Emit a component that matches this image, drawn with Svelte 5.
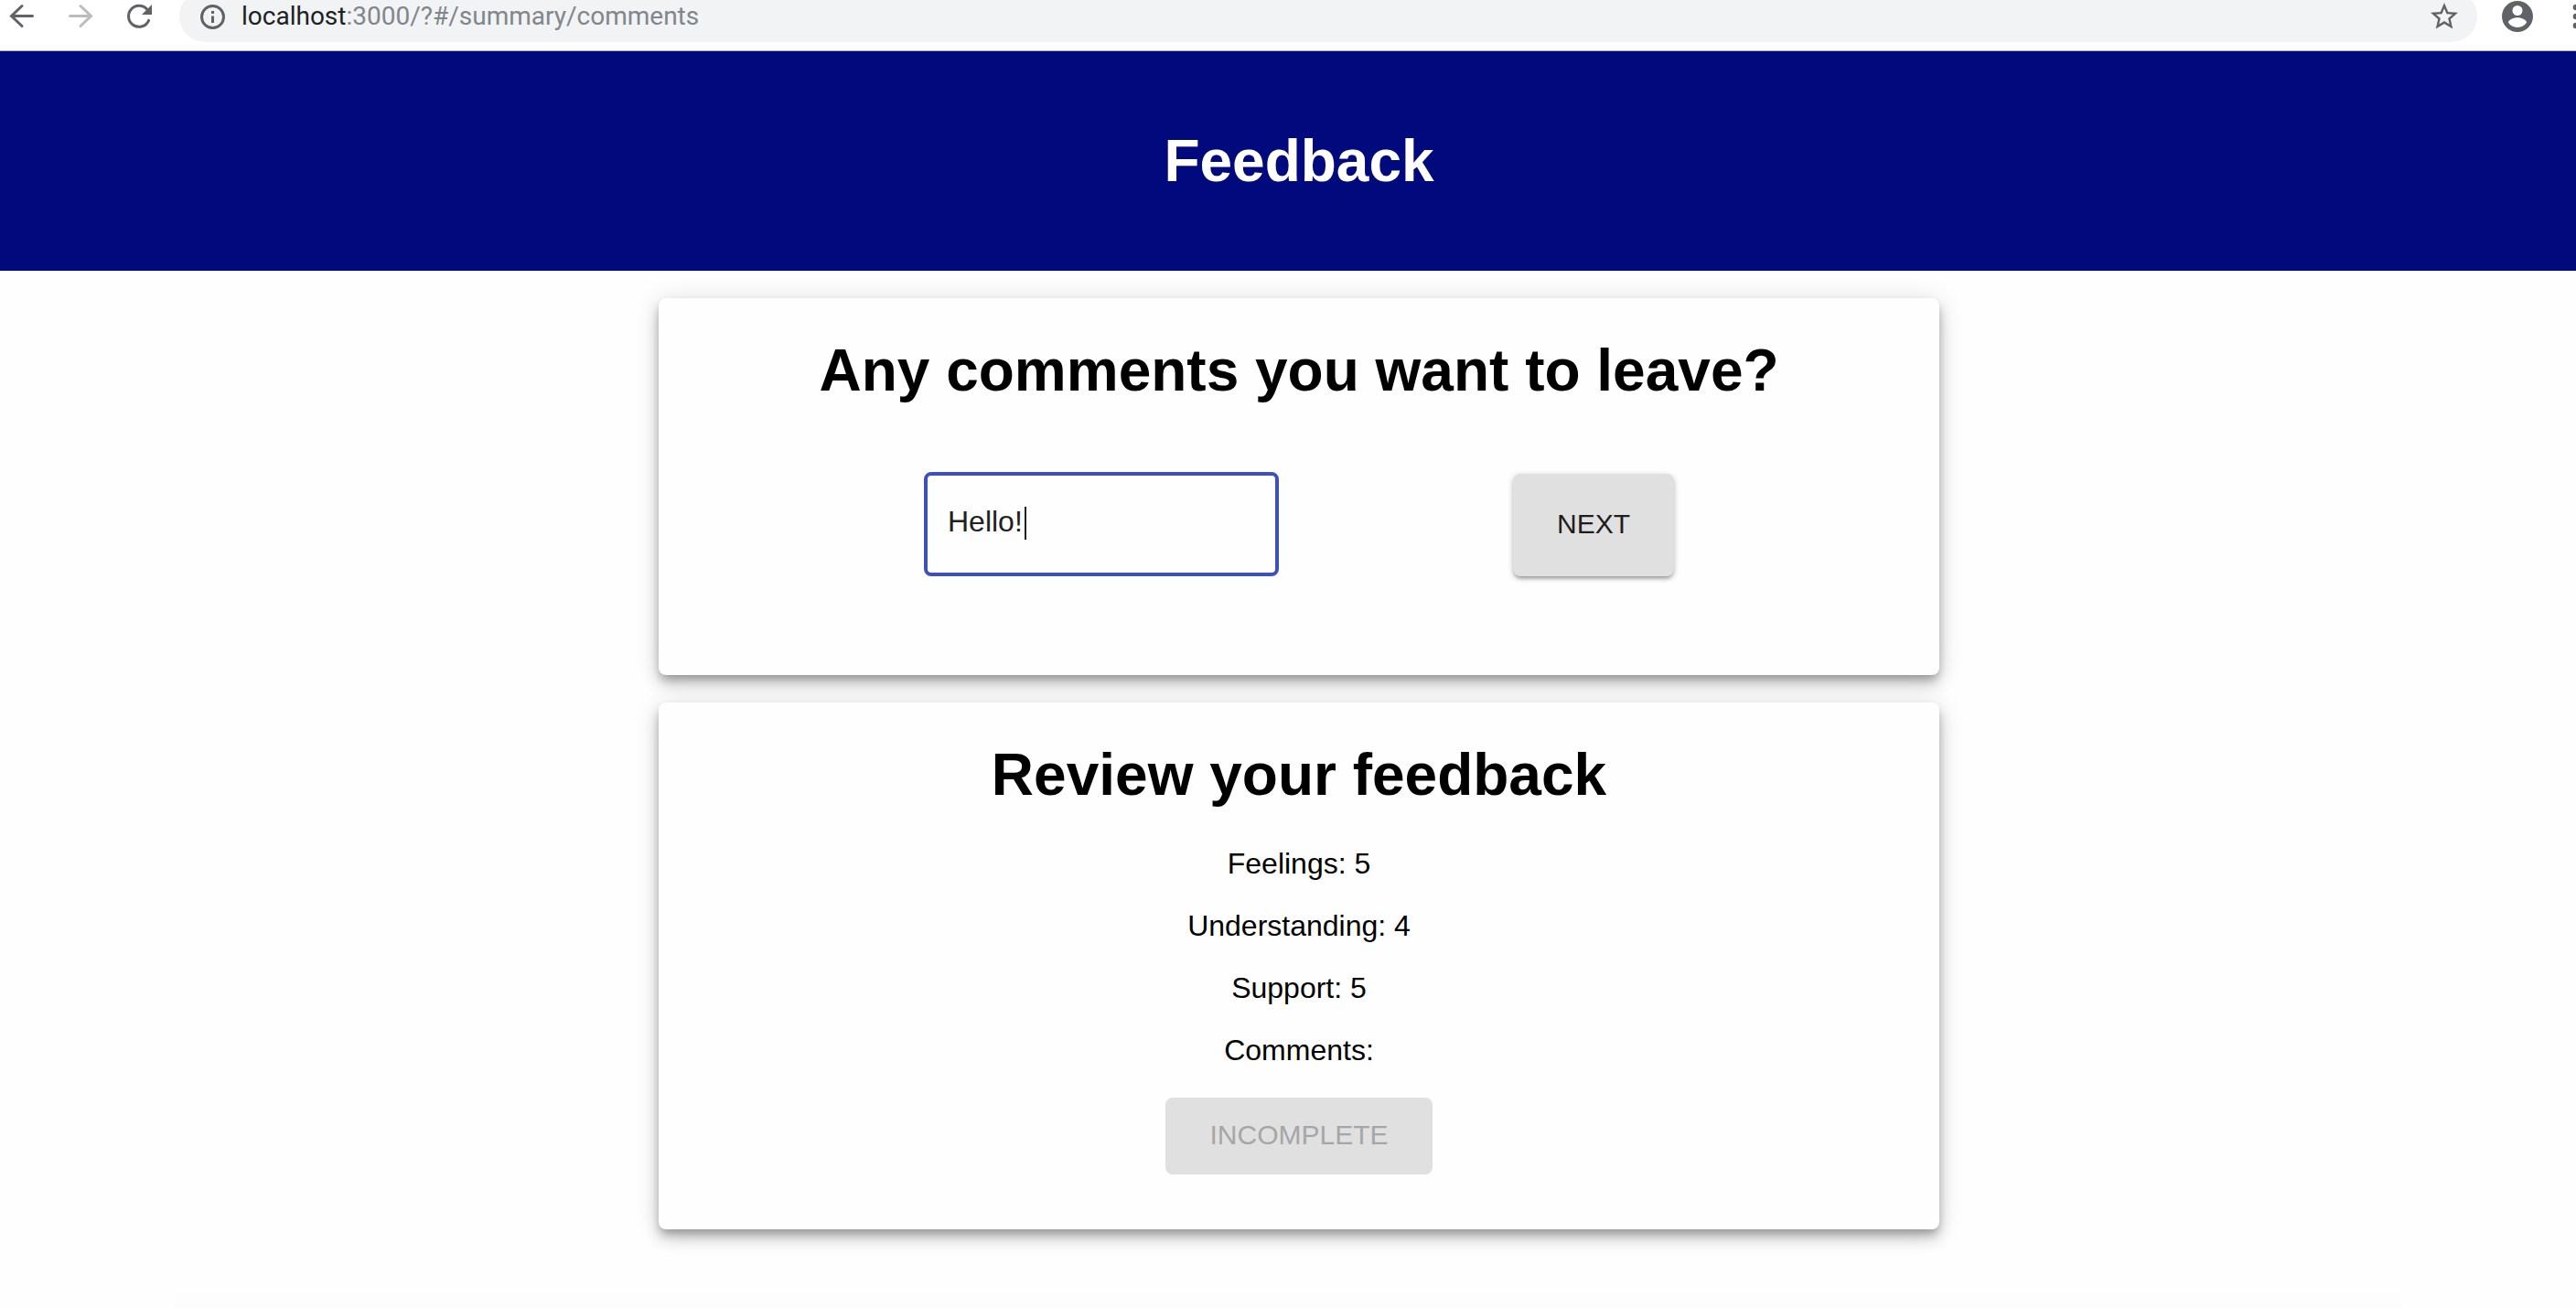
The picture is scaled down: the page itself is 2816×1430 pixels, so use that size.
<script>
  let comment = $state('Hello!');
  const answers = [
    { label: 'Feelings', value: '5' },
    { label: 'Understanding', value: '4' },
    { label: 'Support', value: '5' },
    { label: 'Comments', value: '' }
  ];
</script>

<div class="window">
  <div class="toolbar">
    <div class="tools">
      <nav class="nav" aria-label="Browser navigation">
        <button class="tool" aria-label="Back">
          <svg width="48" height="36" viewBox="0 0 48 36" fill="none" stroke="#5f6368" stroke-width="3" stroke-linecap="round">
            <path d="M24 6.500 12.500 17.500 24 28.500M13 17.500H35.500" />
          </svg>
        </button>
        <button class="tool" aria-label="Forward" disabled>
          <svg width="48" height="36" viewBox="0 0 48 36" fill="none" stroke="#babcbe" stroke-width="3" stroke-linecap="round">
            <path d="M24 6.500 35.500 17.500 24 28.500M35 17.500H12.500" />
          </svg>
        </button>
        <button class="tool" aria-label="Reload">
          <svg width="48" height="36" viewBox="0 0 48 36" fill="none">
            <path d="M34.600 22.300A11.500 11.500 0 1 1 32.500 10" stroke="#5f6368" stroke-width="3" stroke-linecap="round" />
            <path d="M38 5V16H27Z" fill="#5f6368" />
          </svg>
        </button>
      </nav>
      <div class="address">
        <svg width="32" height="32" viewBox="0 0 32 32" fill="none">
          <circle cx="16.500" cy="16.500" r="12" stroke="#5f6368" stroke-width="3" />
          <path d="M16.500 10V13M16.500 15.500V23" stroke="#5f6368" stroke-width="3" />
        </svg>
        <span class="url">localhost<span class="path">:3000/?#/summary/comments</span></span>
        <button class="tool" aria-label="Bookmark this page">
          <svg width="36" height="36" viewBox="0 0 24 24" fill="#5f6368">
            <path d="M22 9.240l-7.190-.620L12 2 9.190 8.630 2 9.240l5.460 4.730L5.820 21 12 17.270 18.180 21l-1.630-7.030L22 9.240zM12 15.400l-3.760 2.270 1-4.280-3.320-2.880 4.380-.380L12 6.100l1.710 4.040 4.380.380-3.320 2.880 1 4.280L12 15.400z" />
          </svg>
        </button>
      </div>
      <button class="tool avatar" aria-label="Profile">
        <svg width="36" height="36" viewBox="0 0 36 36">
          <circle cx="18" cy="18" r="17" fill="#5f6368" />
          <circle cx="18" cy="11.500" r="5.500" fill="#fff" />
          <path d="M7.800 24.300C9.500 20.800 14 19.300 18 19.300S26.500 20.800 28.200 24.300C26 28 22.500 30 18 30S10 28 7.800 24.300Z" fill="#fff" />
        </svg>
      </button>
      <button class="tool more" aria-label="More">
        <svg width="36" height="36" viewBox="0 0 36 36" fill="#5f6368">
          <circle cx="18" cy="8" r="3.300" />
          <circle cx="18" cy="18" r="3.300" />
          <circle cx="18" cy="28" r="3.300" />
        </svg>
      </button>
    </div>
  </div>

  <header class="banner"><h1>Feedback</h1></header>

  <main class="content">
    <section class="card">
      <h1>Any comments you want to leave?</h1>
      <form class="entry" onsubmit={(e) => e.preventDefault()}>
        <div class="field">
          <input type="text" aria-label="Comments" bind:value={comment} />
          <span class="caret"></span>
        </div>
        <button class="btn next" type="submit">NEXT</button>
      </form>
    </section>

    <section class="card review">
      <h1>Review your feedback</h1>
      <div class="answers">
        {#each answers as a}
          <p>{a.label}: {a.value}</p>
        {/each}
        <button class="btn incomplete" type="button" disabled>INCOMPLETE</button>
      </div>
    </section>
  </main>
  <div class="edge"></div>
</div>

<style>
  :global(body) {
    background: #fefefe;
    overflow: hidden;
  }
  .window {
    display: flex;
    flex-direction: column;
    min-height: 100vh;
    overflow: hidden;
    font-family: "Liberation Sans", Helvetica, Arial, sans-serif;
    font-size: 32px;
    line-height: 36px;
    color: #000;
  }
  .toolbar {
    height: 55px;
    overflow: hidden;
    background: #fff;
    border-bottom: 1px solid #b5b6b8;
  }
  .tools {
    display: flex;
    align-items: center;
    height: 56px;
    margin: -10px -18px 0 0;
  }
  .nav {
    display: flex;
    gap: 16px;
    margin-right: 20px;
  }
  .tool {
    display: block;
    flex: none;
    padding: 0;
    border: 0;
    background: none;
  }
  svg {
    display: block;
    flex: none;
  }
  .address {
    flex: 1;
    display: flex;
    align-items: center;
    gap: 16px;
    height: 56px;
    padding: 0 18px 0 20px;
    box-sizing: border-box;
    border-radius: 28px;
    background: #f1f3f4;
  }
  .url {
    flex: 1;
    font-family: Roboto, sans-serif;
    font-size: 28px;
    color: #202124;
  }
  .path {
    color: #80868b;
  }
  .avatar {
    margin: 0 28px 0 26px;
  }
  h1 {
    margin: 0;
    font-size: 64px;
    line-height: 74px;
    font-weight: bold;
    text-align: center;
  }
  .banner {
    box-sizing: border-box;
    padding: 83px 0 83px 24px;
    background: #000a7c;
    color: #fff;
  }
  .content {
    display: flex;
    flex-direction: column;
    align-items: center;
    gap: 30px;
    padding: 30px 0 0 24px;
  }
  .card {
    width: 100%;
    max-width: 1400px;
    box-sizing: border-box;
    padding: 42px 0 108px;
    border-radius: 8px;
    background: #fefefe;
    box-shadow:
      0 6px 10px -2px rgba(0, 0, 0, 0.24),
      0 10px 16px 0 rgba(0, 0, 0, 0.18),
      0 2px 28px 0 rgba(0, 0, 0, 0.13);
  }
  .review {
    padding-bottom: 60px;
  }
  .entry {
    display: flex;
    justify-content: center;
    align-items: flex-end;
    gap: 256px;
    margin-top: 74px;
  }
  .field {
    position: relative;
    width: 388px;
  }
  input {
    display: block;
    width: 100%;
    height: 114px;
    box-sizing: border-box;
    padding: 0 22px 6px;
    border: 4px solid #3f51b5;
    border-radius: 8px;
    outline: 0;
    background: none;
    font: inherit;
    color: #212121;
  }
  .caret {
    position: absolute;
    left: 110px;
    top: 38px;
    width: 2px;
    height: 36px;
    background: #212121;
  }
  .btn {
    padding: 0 48px 2px;
    border: 0;
    border-radius: 8px;
    background: #e0e0e0;
    font-family: inherit;
    font-size: 30px;
    color: #1e1e1e;
  }
  .next {
    height: 112px;
    box-shadow:
      0 2px 6px 0 rgba(0, 0, 0, 0.24),
      0 4px 4px -2px rgba(0, 0, 0, 0.28);
  }
  .answers {
    display: flex;
    flex-direction: column;
    align-items: center;
    gap: 32px;
    margin-top: 42px;
  }
  p {
    margin: 0;
  }
  .incomplete {
    height: 84px;
    margin-top: 2px;
    color: #a6a6a6;
  }
  .edge {
    height: 24px;
    margin: auto 190px 0;
    background: linear-gradient(rgba(0, 0, 0, 0), rgba(0, 0, 0, 0.008));
  }
</style>
